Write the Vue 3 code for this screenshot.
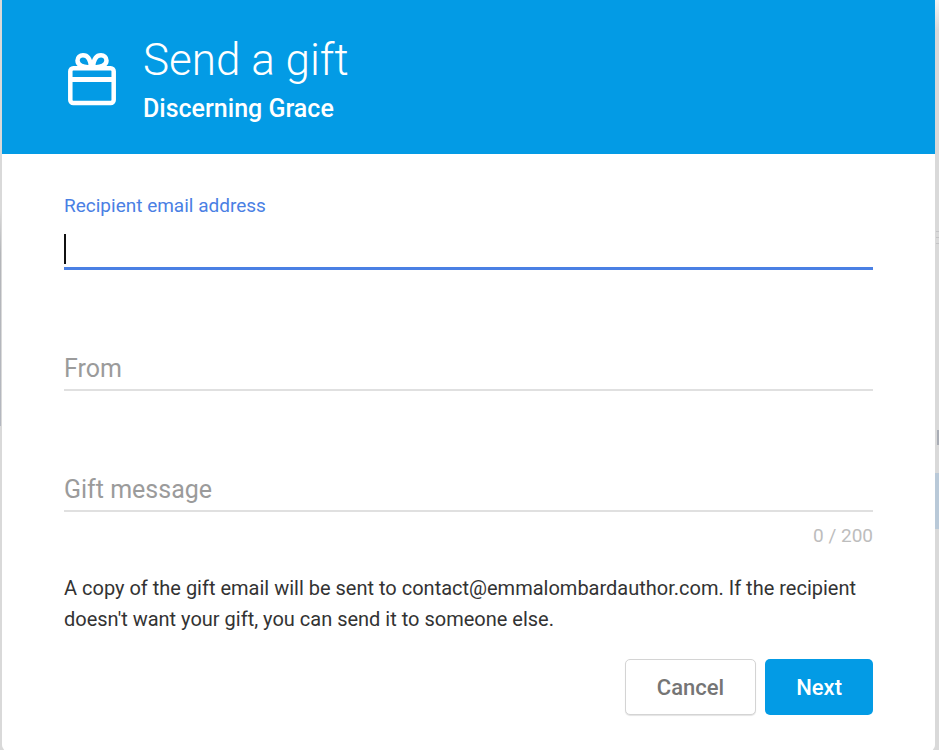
<script setup>
import { ref } from 'vue'

const recipient = ref('')
const sender = ref('')
const message = ref('')
const limit = 200
</script>

<template>
  <div class="backdrop">
    <form class="dialog" @submit.prevent>
      <header class="head">
        <svg class="gift" viewBox="0 0 48 54" fill="none" stroke="#fff" aria-hidden="true">
          <rect x="2.300" y="16.300" width="43.400" height="34.700" rx="3" stroke-width="4.500" />
          <path d="M3 27.500H45" stroke-width="5" />
          <path d="M23 15C15 16 9.500 13 9.500 8.500C9.500 5 12 3.300 15 3.300C20 3.300 22.500 8 23 15Z" stroke-width="4.500" />
          <path d="M25 15C33 16 38.500 13 38.500 8.500C38.500 5 36 3.300 33 3.300C28 3.300 25.500 8 25 15Z" stroke-width="4.500" />
        </svg>
        <div>
          <h1>Send a gift</h1>
          <h2>Discerning Grace</h2>
        </div>
      </header>

      <div class="body">
        <div class="field active">
          <label for="recipient">Recipient email address</label>
          <div class="entry">
            <input id="recipient" v-model="recipient" type="email" />
            <span v-if="!recipient" class="caret"></span>
          </div>
        </div>
        <div class="field">
          <input id="from" v-model="sender" type="text" placeholder="From" aria-label="From" />
        </div>
        <div class="field">
          <input id="message" v-model="message" type="text" placeholder="Gift message" aria-label="Gift message" :maxlength="limit" />
        </div>
        <div class="count">{{ message.length }} / {{ limit }}</div>
        <p>
          A copy of the gift email will be sent to contact@emmalombardauthor.com. If the recipient
          doesn't want your gift, you can send it to someone else.
        </p>
        <div class="actions">
          <button type="button" class="cancel">Cancel</button>
          <button type="submit" class="next">Next</button>
        </div>
      </div>
    </form>
  </div>
</template>

<style>
body {
  background: #d9d9d9;
}
</style>

<style scoped>
.backdrop {
  box-sizing: border-box;
  min-height: 100vh;
  padding: 0 4px 0 2px;
  font-family: Roboto, "Liberation Sans", sans-serif;
  background:
    linear-gradient(#b9c9d8, #b9c9d8) right 473px / 4px 56px no-repeat,
    linear-gradient(#a9adb5, #a9adb5) right 430px / 2px 15px no-repeat,
    linear-gradient(#c4c4c6, #c4c4c6) right 231px / 3px 1px no-repeat,
    linear-gradient(#c4c4c6, #c4c4c6) right 237px / 3px 1px no-repeat,
    linear-gradient(#c4c4c6, #c4c4c6) right 243px / 3px 1px no-repeat,
    linear-gradient(#d9d9d9, #b4b6ba 20%, #b4b8c0) left 210px / 1px 216px no-repeat,
    linear-gradient(#f4f4f4, #d9d9d9) right 0 / 4px 30px no-repeat,
    #d9d9d9;
}

.dialog {
  overflow: hidden;
  background: #fff;
  border-radius: 0 0 6px 6px;
}

.head {
  display: flex;
  align-items: flex-start;
  gap: 27px;
  box-sizing: border-box;
  min-height: 154px;
  padding: 32px 66px 24px;
  color: #fff;
  background: #039be5;
}

.gift {
  width: 48px;
  height: 54px;
  margin-top: 20px;
}

h1 {
  margin: 0;
  font-size: 44px;
  font-weight: 300;
  line-height: 56px;
}

h2 {
  margin: 5px 0 0;
  font-size: 25px;
  font-weight: 500;
  line-height: 32px;
}

.body {
  padding: 36px 62px;
}

.field {
  margin-bottom: 76px;
}

label {
  display: block;
  font-size: 19px;
  line-height: 32px;
  color: #4a80e4;
}

.entry {
  position: relative;
}

input {
  display: block;
  box-sizing: border-box;
  width: 100%;
  height: 45px;
  padding: 2px 0 0;
  border: 0;
  border-bottom: 2px solid #e0e0e0;
  border-radius: 0;
  outline: none;
  background: transparent;
  font: inherit;
  font-size: 25px;
  color: #333;
}

input::placeholder {
  color: #9b9b9b;
  opacity: 1;
}

.active input {
  height: 48px;
  border-bottom: 3px solid #4a80e4;
}

.caret {
  position: absolute;
  top: 12px;
  left: 0;
  width: 2px;
  height: 30px;
  background: #111;
}

.field + .count {
  margin-top: -64px;
}

.count {
  font-size: 19px;
  line-height: 24px;
  text-align: right;
  color: #bdbdbd;
}

p {
  margin: 25px 0 24px;
  font-size: 20px;
  line-height: 31px;
  color: #333;
}

.actions {
  display: flex;
  justify-content: flex-end;
  gap: 9px;
}

button {
  height: 56px;
  padding: 0 31px;
  border: 0;
  border-radius: 5px;
  font: inherit;
  font-size: 22px;
  font-weight: 500;
}

.cancel {
  border: 1px solid #d4d4d4;
  color: #757575;
  background: #fff;
  box-shadow: 0 1px 1px #e4e4e4;
}

.next {
  color: #fff;
  background: #039be5;
}
</style>
